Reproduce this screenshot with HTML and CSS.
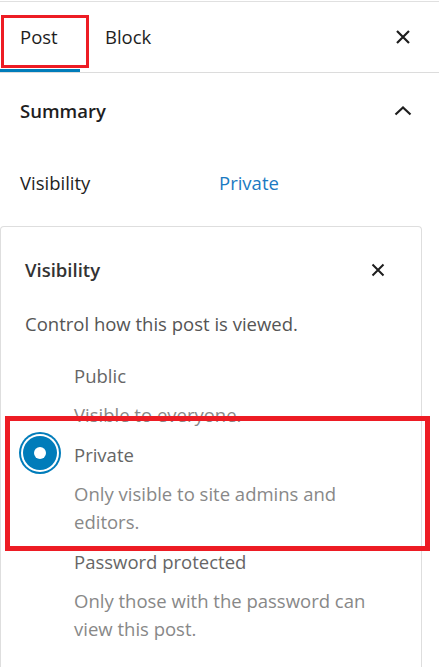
FILE: index.html
```html
<!DOCTYPE html>
<html lang="en">
<head>
<meta charset="utf-8">
<title>Post settings</title>
<link rel="stylesheet" href="styles.css">
</head>
<body>
<div class="panel">
  <div class="tabs">
    <div class="tab tab-active">Post</div>
    <div class="tab tab-block">Block</div>
    <button class="icon-btn tabs-close" aria-label="Close settings">
      <svg width="16" height="16" viewBox="0 0 16 16"><path d="M2 2 L14 14 M14 2 L2 14" stroke="#1e1e1e" stroke-width="2.2" fill="none"/></svg>
    </button>
  </div>

  <div class="section">
    <div class="section-head">
      <span class="section-title">Summary</span>
      <svg class="chevron" width="18" height="10" viewBox="0 0 18 10"><path d="M1.5 8.5 L9 1.5 L16.5 8.5" stroke="#1e1e1e" stroke-width="2.2" fill="none"/></svg>
    </div>
    <div class="row">
      <span class="row-label">Visibility</span>
      <span class="row-value">Private</span>
    </div>
  </div>

  <div class="popover">
    <div class="pop-head">
      <span class="pop-title">Visibility</span>
      <svg width="14" height="14" viewBox="0 0 14 14"><path d="M1.5 1.5 L12.5 12.5 M12.5 1.5 L1.5 12.5" stroke="#1e1e1e" stroke-width="2" fill="none"/></svg>
    </div>
    <p class="pop-intro">Control how this post is viewed.</p>
    <div class="options">
      <div class="option">
        <span class="radio"></span>
        <div class="option-text">
          <div class="opt-label">Public</div>
          <div class="opt-desc">Visible to everyone.</div>
        </div>
      </div>
      <div class="option">
        <span class="radio radio-checked"></span>
        <div class="option-text">
          <div class="opt-label">Private</div>
          <div class="opt-desc">Only visible to site admins and editors.</div>
        </div>
      </div>
      <div class="option">
        <span class="radio"></span>
        <div class="option-text">
          <div class="opt-label">Password protected</div>
          <div class="opt-desc">Only those with the password can view this post.</div>
        </div>
      </div>
    </div>
  </div>
</div>
<div class="annot annot-post"></div>
<div class="annot annot-private"></div>
</body>
</html>
```

FILE: styles.css
```css
* { box-sizing: border-box; }
html, body { margin: 0; padding: 0; background: #fff; }
body {
  font-family: "Open Sans", "Noto Sans", sans-serif;
  font-size: 18.5px;
  color: #1e1e1e;
  padding-top: 1px;
  height: 667px;
  overflow: hidden;
  position: relative;
}
.panel { border-top: 1px solid #e0e0e0; }

.tabs {
  display: flex;
  align-items: center;
  height: 71px;
  border-bottom: 1px solid #dcdcdc;
}
.tab {
  height: 100%;
  display: flex;
  align-items: center;
  line-height: 1;
}
.tab-active {
  width: 80px;
  padding-left: 20px;
  box-shadow: inset 0 -3px 0 #007cba;
}
.tab-block { padding-left: 25px; }
.icon-btn {
  border: 0;
  background: none;
  padding: 0;
  margin: 0;
  display: flex;
}
.tabs-close { margin-left: auto; margin-right: 28px; }

.section { padding: 0 20px; }
.section-head {
  display: flex;
  align-items: center;
  justify-content: space-between;
  height: 76px;
  padding-bottom: 1px;
}
.section-title { font-weight: 600; }
.chevron { margin-right: 7px; }
.row {
  display: flex;
  align-items: center;
  height: 76px;
  padding-bottom: 10px;
}
.row-label { width: 199px; }
.row-value { color: #1b7ac2; }

.popover {
  margin-top: 1px;
  width: 422px;
  border: 1px solid #dedede;
  border-bottom: 0;
  border-radius: 4px 4px 0 0;
  color: #555;
  padding-bottom: 40px;
}
.pop-head {
  display: flex;
  align-items: center;
  justify-content: space-between;
  padding: 29px 36px 0 24px;
  line-height: 28px;
}
.pop-title { font-weight: 600; color: #333; }
.pop-intro {
  margin: 26px 0 0;
  padding: 0 24px;
  line-height: 28px;
}
.options {
  display: flex;
  flex-direction: column;
  gap: 12px;
  margin-top: 24px;
  padding-left: 22px;
}
.option {
  display: flex;
  gap: 17px;
  align-items: flex-start;
}
.radio {
  flex: none;
  width: 34px;
  height: 34px;
  border-radius: 50%;
  margin-top: -5px;
}
.radio-checked {
  background: #007cba;
  box-shadow: 0 0 0 2px #fff, 0 0 0 4px #007cba;
  position: relative;
}
.radio-checked::after {
  content: "";
  position: absolute;
  left: 11px;
  top: 11px;
  width: 12px;
  height: 12px;
  border-radius: 50%;
  background: #fff;
}
.option-text { width: 300px; }
.opt-label { line-height: 28px; color: #666; }
.opt-desc { line-height: 28px; color: #888; margin-top: 11px; }

.annot {
  position: absolute;
  border: 3px solid #ed1c24;
  pointer-events: none;
}
.annot-post { left: 1px; top: 15px; width: 88px; height: 53px; }
.annot-private { left: 5px; top: 416px; width: 425px; height: 135px; border-width: 5px; }
```
